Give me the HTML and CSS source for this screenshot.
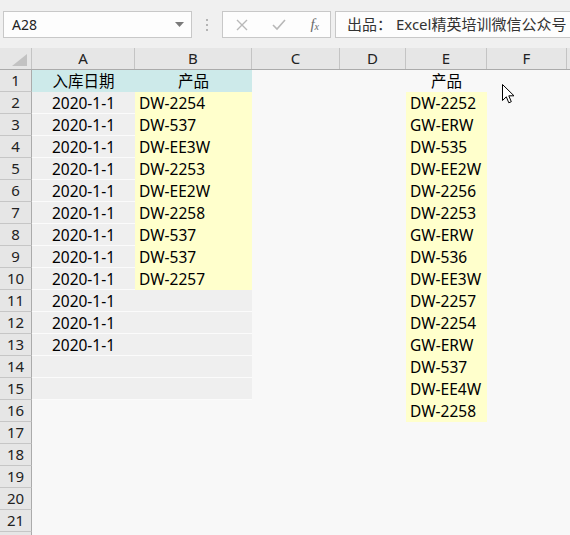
FILE: index.html
```html
<!DOCTYPE html>
<html lang="zh-CN">
<head>
    <meta charset="UTF-8">
    <title>入库记录</title>
    <link rel="stylesheet" href="styles.css">
</head>
<body>

<div class="toolbar">
    <div class="namebox">
        <span>A28</span>
        <svg class="drop" width="9" height="5" viewBox="0 0 9 5"><path d="M0 0h9L4.5 5z" fill="#7a7a7a"/></svg>
    </div>
    <div class="grip">
        <svg width="3" height="12" viewBox="0 0 3 12"><rect x="0" y="0" width="2" height="2" fill="#b4b4b4"/><rect x="0" y="5" width="2" height="2" fill="#b4b4b4"/><rect x="0" y="10" width="2" height="2" fill="#b4b4b4"/></svg>
    </div>
    <div class="fbuttons">
        <svg width="12" height="12" viewBox="0 0 12 12"><path d="M1 1l10 10M11 1L1 11" stroke="#b8b8b8" stroke-width="1.4"/></svg>
        <svg width="14" height="12" viewBox="0 0 14 12"><path d="M1 6l4 4 8-9" stroke="#b8b8b8" stroke-width="1.6" fill="none"/></svg>
        <span class="fx">f<sub>x</sub></span>
    </div>
    <div class="formula">出品：&nbsp;Excel精英培训微信公众号</div>
</div>

<div class="sheet">
    <div class="row head">
        <div class="corner"><svg width="15" height="12" viewBox="0 0 15 12"><path d="M15 0V12H0z" fill="#c2c2c2"/></svg></div>
        <div class="col">A</div><div class="col">B</div><div class="col">C</div><div class="col">D</div><div class="col">E</div><div class="col">F</div><div class="col"></div>
    </div>
    <div class="row">
        <div class="num">1</div>
        <div class="cell teal center">入库日期</div><div class="cell teal center">产品</div><div></div><div></div><div class="cell center">产品</div>
    </div>
    <div class="row">
        <div class="num">2</div>
        <div class="cell grey center">2020-1-1</div><div class="cell yellow">DW-2254</div><div></div><div></div><div class="cell yellow">DW-2252</div>
    </div>
    <div class="row">
        <div class="num">3</div>
        <div class="cell grey center">2020-1-1</div><div class="cell yellow">DW-537</div><div></div><div></div><div class="cell yellow">GW-ERW</div>
    </div>
    <div class="row">
        <div class="num">4</div>
        <div class="cell grey center">2020-1-1</div><div class="cell yellow">DW-EE3W</div><div></div><div></div><div class="cell yellow">DW-535</div>
    </div>
    <div class="row">
        <div class="num">5</div>
        <div class="cell grey center">2020-1-1</div><div class="cell yellow">DW-2253</div><div></div><div></div><div class="cell yellow">DW-EE2W</div>
    </div>
    <div class="row">
        <div class="num">6</div>
        <div class="cell grey center">2020-1-1</div><div class="cell yellow">DW-EE2W</div><div></div><div></div><div class="cell yellow">DW-2256</div>
    </div>
    <div class="row">
        <div class="num">7</div>
        <div class="cell grey center">2020-1-1</div><div class="cell yellow">DW-2258</div><div></div><div></div><div class="cell yellow">DW-2253</div>
    </div>
    <div class="row">
        <div class="num">8</div>
        <div class="cell grey center">2020-1-1</div><div class="cell yellow">DW-537</div><div></div><div></div><div class="cell yellow">GW-ERW</div>
    </div>
    <div class="row">
        <div class="num">9</div>
        <div class="cell grey center">2020-1-1</div><div class="cell yellow">DW-537</div><div></div><div></div><div class="cell yellow">DW-536</div>
    </div>
    <div class="row">
        <div class="num">10</div>
        <div class="cell grey center">2020-1-1</div><div class="cell yellow">DW-2257</div><div></div><div></div><div class="cell yellow">DW-EE3W</div>
    </div>
    <div class="row">
        <div class="num">11</div>
        <div class="cell grey center">2020-1-1</div><div class="cell grey"></div><div></div><div></div><div class="cell yellow">DW-2257</div>
    </div>
    <div class="row">
        <div class="num">12</div>
        <div class="cell grey center">2020-1-1</div><div class="cell grey"></div><div></div><div></div><div class="cell yellow">DW-2254</div>
    </div>
    <div class="row">
        <div class="num">13</div>
        <div class="cell grey center">2020-1-1</div><div class="cell grey"></div><div></div><div></div><div class="cell yellow">GW-ERW</div>
    </div>
    <div class="row">
        <div class="num">14</div>
        <div class="cell grey"></div><div class="cell grey"></div><div></div><div></div><div class="cell yellow">DW-537</div>
    </div>
    <div class="row">
        <div class="num">15</div>
        <div class="cell grey"></div><div class="cell grey"></div><div></div><div></div><div class="cell yellow">DW-EE4W</div>
    </div>
    <div class="row">
        <div class="num">16</div>
        <div></div><div></div><div></div><div></div><div class="cell yellow">DW-2258</div>
    </div>
    <div class="row"><div class="num">17</div></div>
    <div class="row"><div class="num">18</div></div>
    <div class="row"><div class="num">19</div></div>
    <div class="row"><div class="num">20</div></div>
    <div class="row"><div class="num">21</div></div>
    <div class="row"><div class="num"></div></div>
</div>

<!-- mouse pointer over column F -->
<svg class="pointer" width="14" height="21" viewBox="0 0 14 21">
    <path d="M0.5 0.5V16.5L4.3 12.8L6.8 18.8L9.3 17.7L6.8 11.8H12z" fill="#fff" stroke="#000" stroke-width="1"/>
</svg>

</body>
</html>
```

FILE: styles.css
```css
body {
    margin: 0;
    width: 570px;
    height: 535px;
    overflow: hidden;
    position: relative;
    background-color: #f8f8f8;
    font-family: "Noto Sans", "Noto Sans CJK SC", sans-serif;
    color: #000;
}

/* name box + formula bar */
.toolbar {
    height: 48px;
    box-sizing: border-box;
    padding: 11px 0 0 3px;
    display: flex;
    align-items: flex-start;
    background-color: #f0f0f0;
    white-space: nowrap;
}
.namebox {
    width: 189px;
    height: 27px;
    box-sizing: border-box;
    border: 1px solid #c8c8c8;
    background-color: #fdfdfd;
    display: flex;
    align-items: center;
    justify-content: space-between;
    padding: 0 7px 0 8px;
    font-size: 14px;
    color: #222;
}
.grip {
    width: 30px;
    height: 27px;
    display: flex;
    align-items: center;
    justify-content: center;
}
.fbuttons {
    width: 109px;
    height: 27px;
    box-sizing: border-box;
    border: 1px solid #c8c8c8;
    background-color: #fdfdfd;
    display: flex;
    align-items: center;
    justify-content: space-between;
    padding: 0 11px 0 13px;
}
.fx {
    font-family: "Liberation Serif", "DejaVu Serif", serif;
    font-style: italic;
    font-size: 15px;
    color: #6a6a6a;
    line-height: 1;
}
.fx sub {
    font-size: 10px;
    vertical-align: -1px;
}
.formula {
    flex: 1;
    height: 27px;
    margin-left: 4px;
    box-sizing: border-box;
    border: 1px solid #c8c8c8;
    border-right: none;
    background-color: #fdfdfd;
    padding-left: 11px;
    font-size: 15px;
    line-height: 25px;
    color: #333;
}

/* worksheet grid */
.row {
    display: grid;
    grid-template-columns: 32px 103px 117px 88px 66px 81px 80px 80px;
    height: 22px;
}
.head {
    background-color: #e6e6e6;
    border-bottom: 1px solid #ababab;
    box-sizing: border-box;
}
.corner {
    border-right: 1px solid #c4c4c4;
    display: flex;
    align-items: flex-end;
    justify-content: flex-end;
    padding: 0 4px 3px 0;
}
.col {
    border-right: 1px solid #c4c4c4;
    text-align: center;
    font-size: 15px;
    line-height: 21px;
    color: #222;
}
.num {
    background-color: #e6e6e6;
    border-right: 1px solid #ababab;
    border-bottom: 1px solid #c6c6c6;
    box-sizing: border-box;
    text-align: center;
    font-size: 15px;
    line-height: 21px;
    color: #222;
}
.cell {
    box-sizing: border-box;
    padding-left: 4px;
    font-size: 15.5px;
    line-height: 22px;
    white-space: nowrap;
    overflow: hidden;
}
.center {
    text-align: center;
    padding-left: 0;
}
.teal {
    background-color: #cdeaea;
}
.yellow {
    background-color: #ffffcc;
}
.grey {
    background-color: #efefef;
    border-bottom: 1px solid #fbfbfb;
}

.pointer {
    position: absolute;
    left: 502px;
    top: 84px;
}
```
